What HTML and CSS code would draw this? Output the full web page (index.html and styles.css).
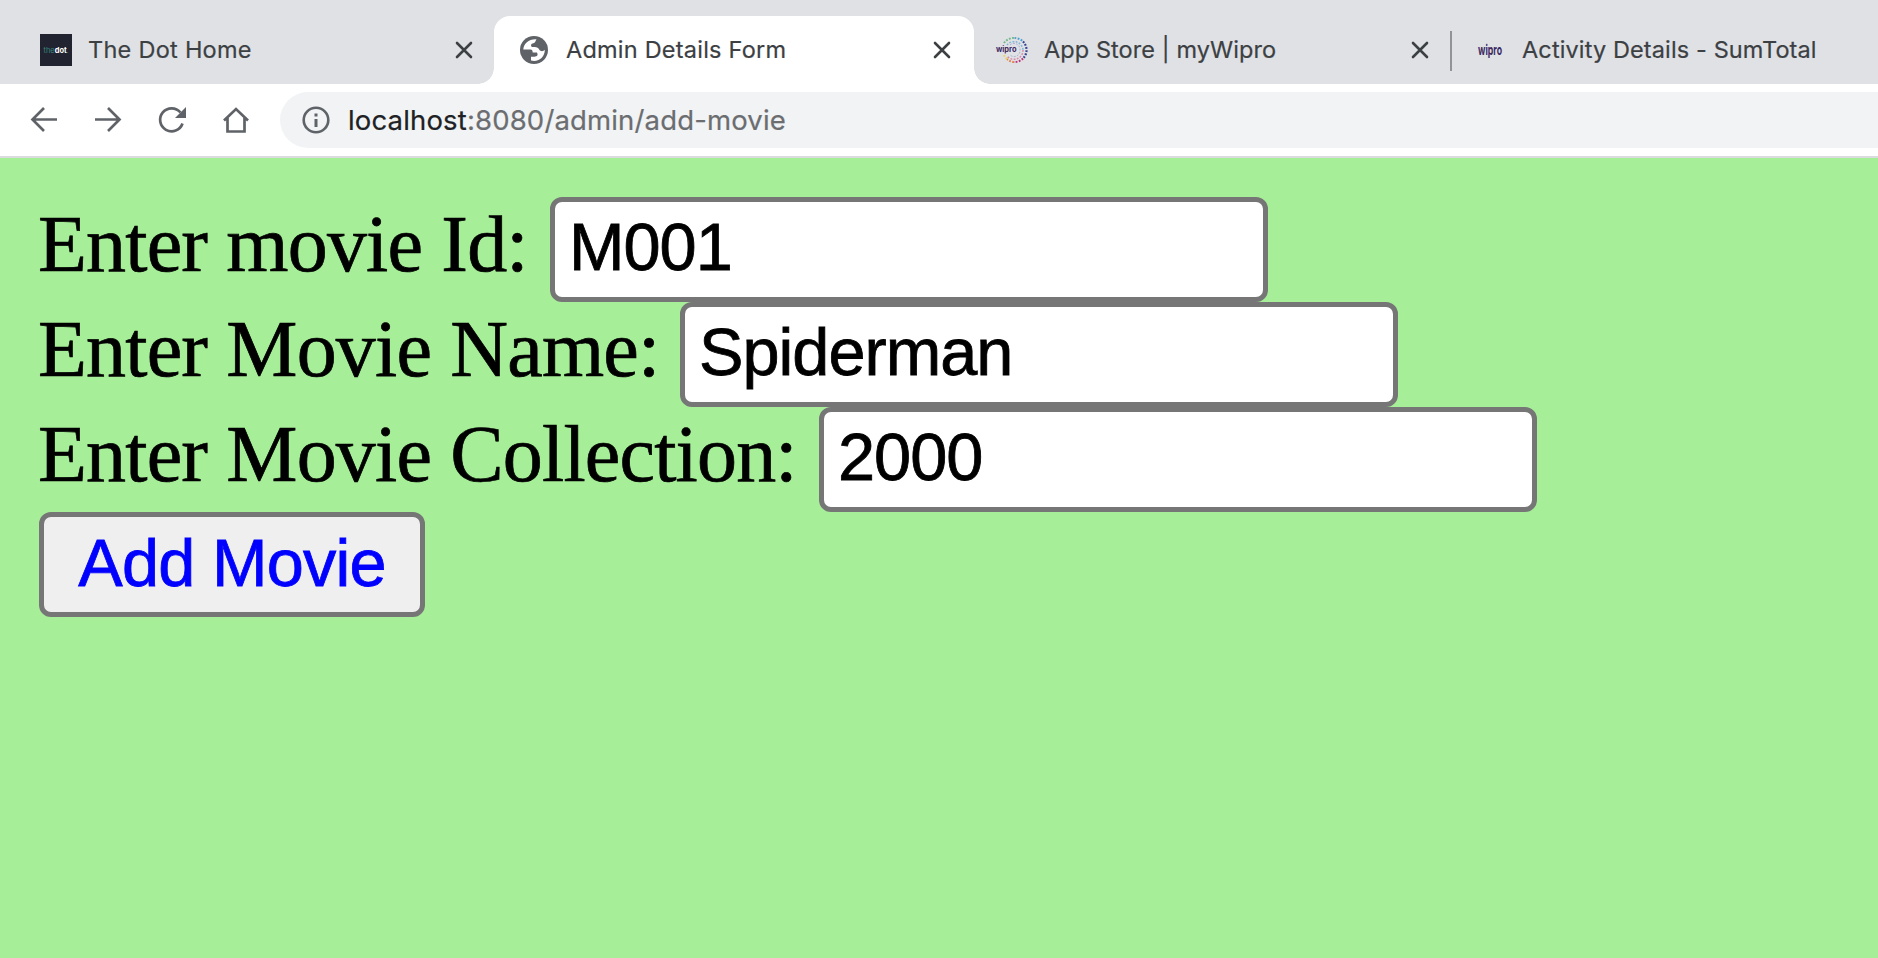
FILE: index.html
```
<!DOCTYPE html>
<html lang="en">
<head>
<meta charset="utf-8">
<title>Admin Details Form</title>
<link rel="stylesheet" href="styles.css">
</head>
<body>
<header class="tabs">
  <div class="tab tab-first">
    <svg class="fav" width="32" height="32"><rect width="32" height="32" fill="#212330"/><text x="3.5" y="18.5" font-size="7.5" textLength="11" lengthAdjust="spacingAndGlyphs" class="dot-thin">the</text><text x="14.8" y="18.5" font-size="7.5" textLength="12" lengthAdjust="spacingAndGlyphs" class="dot-bold">dot</text><text x="26.5" y="18.5" font-size="7.5" class="dot-thin">.</text></svg>
    <span class="title t1">The Dot Home</span>
    <svg class="close" width="18" height="18"><path d="M2 2L16 16M16 2L2 16"/></svg>
  </div>
  <div class="tab active">
    <svg class="fav globe" width="28" height="28" viewBox="0 0 28 28"><circle cx="14" cy="14" r="14" fill="#5f6368"/><path d="M16.5 3.2C9.5 2.5 3.5 7.5 3.3 13.5H10.500C12 13.500 12.700 14.600 12.700 16.500H17C18.300 19 17.500 20.500 14.300 20.700H11V24.500C18.500 26.500 25 21 24.800 13.800C23.500 15.600 20.500 15.500 19.500 14C18.500 11.500 16.500 11 12 11C10.300 9.500 11 7.800 13.300 7.300C15.300 7 15.500 4.500 16.500 3.200Z" fill="#fff"/></svg>
    <span class="title t2">Admin Details Form</span>
    <svg class="close" width="18" height="18"><path d="M2 2L16 16M16 2L2 16"/></svg>
  </div>
  <div class="tab tab-third">
    <svg class="fav" width="32" height="32" viewBox="0 0 32 32"><g fill="none" stroke-dasharray="1.800 1.400"><path d="M8 9A12 12 0 0 1 18.500 4" stroke="#73b98a" stroke-width="2"/><path d="M18.500 4A12 12 0 0 1 27 7.500" stroke="#4f9fd0" stroke-width="2"/><path d="M27 7.500A12 12 0 0 1 27 24.500" stroke="#344391" stroke-width="2.200"/><path d="M27 24.500A12 12 0 0 1 18 28" stroke="#bd3476" stroke-width="2"/><path d="M18 28A12 12 0 0 1 11 25" stroke="#e5824f" stroke-width="2"/><path d="M11 25A12 12 0 0 1 7.500 20" stroke="#ead46f" stroke-width="2"/><path d="M11 11A9 9 0 0 1 27 16" stroke="#7fb5d8" stroke-width="1.500"/><path d="M27 16A9 9 0 0 1 11 22" stroke="#d98aa6" stroke-width="1.500"/><path d="M14 11A6 6 0 0 1 24 16A6 6 0 0 1 14 21" stroke="#a4a9d0"/></g><text x="0" y="18" font-size="8" textLength="20.500" lengthAdjust="spacingAndGlyphs" class="wipro">wipro</text></svg>
    <span class="title t3">App Store | myWipro</span>
    <svg class="close" width="18" height="18"><path d="M2 2L16 16M16 2L2 16"/></svg>
  </div>
  <div class="tab tab-last">
    <svg class="fav" width="26" height="32" viewBox="0 0 26 32"><text transform="translate(0 20.500) scale(1 1.550)" x="1" y="0" font-size="9.500" textLength="24" lengthAdjust="spacingAndGlyphs" class="wipro">wipro</text></svg>
    <span class="title t4">Activity Details - SumTotal</span>
  </div>
</header>
<nav class="toolbar">
  <div class="buttons">
    <svg width="28" height="28" viewBox="0 0 28 28"><path d="M27 13.500H3M14 2L2.500 13.500L14 25"/></svg>
    <svg width="28" height="28" viewBox="0 0 28 28"><path d="M1 13.500H25M14 2L25.500 13.500L14 25"/></svg>
    <svg width="28" height="28" viewBox="0 0 28 28"><path d="M24.500 17.500A11.500 11.500 0 1 1 22.500 6.500"/><path class="solid" d="M28 1V12H17Z"/></svg>
    <svg width="28" height="28" viewBox="0 0 28 28"><path d="M2 14.500L14 3L26 14.500M5.500 12V25.500H22.500V12"/></svg>
  </div>
  <div class="omnibox">
    <svg width="28" height="28" viewBox="0 0 28 28"><circle cx="14" cy="14" r="12.300" fill="none" stroke="#5f6368" stroke-width="2.600"/><path d="M12.500 7.500h3v3h-3zM12.500 13h3v8h-3z" fill="#5f6368"/></svg>
    <span class="url"><b>localhost</b>:8080/admin/add-movie</span>
  </div>
</nav>
<form class="page">
  <div class="row"><label class="l-id" for="id">Enter movie Id:</label><input id="id" value="M001"></div>
  <div class="row"><label class="l-name" for="name">Enter Movie Name:</label><input id="name" value="Spiderman"></div>
  <div class="row"><label class="l-coll" for="coll">Enter Movie Collection:</label><input id="coll" value="2000"></div>
  <button type="button">Add Movie</button>
</form>
</body>
</html>
```
FILE: styles.css
```
* { box-sizing: border-box; }
html, body { height: 100%; margin: 0; }
body { display: flex; flex-direction: column; overflow: hidden; background: #a7ee99; }
svg { display: block; flex: none; overflow: visible; }

.tabs { display: flex; flex: none; height: 84px; padding-top: 16px; background: #dfe1e5; font-family: Inter, sans-serif; font-size: 23.5px; color: #3c4043; }
.tab { display: flex; align-items: center; position: relative; height: 68px; padding-right: 21px; }
.tab-first { width: 494px; padding-left: 40px; }
.active { width: 480px; padding-left: 26px; padding-right: 23px; background: #fff; border-radius: 16px 16px 0 0; }
.active::before, .active::after { content: ""; position: absolute; bottom: 0; width: 16px; height: 16px; }
.active::before { left: -16px; background: radial-gradient(circle at 0 0, transparent 15.5px, #fff 16px); }
.active::after { right: -16px; background: radial-gradient(circle at 100% 0, transparent 15.5px, #fff 16px); }
.tab-third { width: 478px; padding-left: 22px; padding-right: 23px; }
.tab-third::after { content: ""; position: absolute; right: 0; top: 15px; width: 2px; height: 40px; background: #919397; }
.tab-last { flex: 1; padding-left: 25px; }
.title { flex: 1; margin-left: 16px; white-space: nowrap; line-height: 32px; -webkit-text-stroke: 0.2px; }
.t1 { letter-spacing: 0.27px; }
.t2 { margin-left: 18px; letter-spacing: 0.22px; }
.t3 { letter-spacing: 0.08px; }
.t4 { margin-left: 19px; letter-spacing: 0.12px; }
.close { fill: none; stroke: #3c4043; stroke-width: 2.6; stroke-linecap: round; }
.dot-thin { font-family: Inter, sans-serif; fill: #39877d; }
.dot-bold { font-family: Inter, sans-serif; font-weight: 700; fill: #fff; }
.wipro { font-family: Inter, sans-serif; font-weight: 700; fill: #3c2963; }

.toolbar { display: flex; flex: none; align-items: center; height: 74px; padding: 0 0 0 30px; background: #fff; border-bottom: 2px solid #dadce0; }
.buttons { display: flex; gap: 36px; width: 250px; }
.buttons path { fill: none; stroke: #5f6368; stroke-width: 2.7; }
.buttons .solid { fill: #5f6368; stroke: none; }
.omnibox { display: flex; flex: 1; align-items: center; height: 56px; padding-left: 22px; background: #f1f3f4; border-radius: 28px 0 0 28px; }
.url { margin-left: 18px; font: 27.5px/40px Inter, sans-serif; letter-spacing: 0.16px; color: #6b6d70; white-space: nowrap; -webkit-text-stroke: 0.2px; }
.url b { font-weight: 400; color: #202124; }

.page { flex: 1; padding: 39px; font-family: "Liberation Serif", serif; font-size: 80px; color: #000; }
.row { display: flex; height: 105px; }
label { flex: none; line-height: 95px; letter-spacing: -0.82px; text-indent: -1px; white-space: nowrap; -webkit-text-stroke: 0.7px; }
.l-id { width: 511px; }
.l-name { width: 641px; }
.l-coll { width: 780px; }
input { width: 718px; height: 105px; padding: 0 14px 5px; border: 5px solid #767676; border-radius: 12px; background: #fff; color: #000; font: 66.67px "Liberation Sans", sans-serif; letter-spacing: -1px; outline: none; -webkit-text-stroke: 0.8px; }
button { display: block; width: 386px; height: 105px; padding: 0 0 3px; border: 5px solid #767676; border-radius: 12px; background: #efefef; color: #00f; font: 66.67px "Liberation Sans", sans-serif; letter-spacing: -0.85px; -webkit-text-stroke: 0.8px; }
```
